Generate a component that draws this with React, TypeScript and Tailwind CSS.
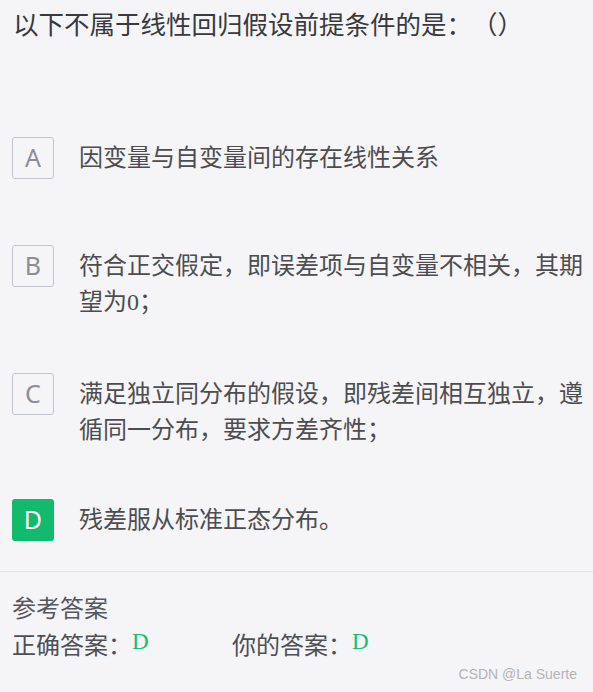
import React from "react";

interface Option {
  key: string;
  text: React.ReactNode;
  selected?: boolean;
}

const options: Option[] = [
  { key: "A", text: "因变量与自变量间的存在线性关系" },
  {
    key: "B",
    text: (
      <>
        符合正交假定，即误差项与自变量不相关，其期望为
        <span className="font-['Liberation_Serif',serif]">0</span>；
      </>
    ),
  },
  { key: "C", text: "满足独立同分布的假设，即残差间相互独立，遵循同一分布，要求方差齐性；" },
  { key: "D", text: "残差服从标准正态分布。", selected: true },
];

const cjk = "font-['Noto_Sans_CJK_SC','Noto_Sans',sans-serif]";

const OptionRow: React.FC<{ option: Option; last: boolean }> = ({ option, last }) => {
  return (
    <div className={`flex items-start ${last ? "" : "min-h-[108px] pb-[53px]"}`}>
      <div
        className={
          option.selected
            ? "w-[42px] h-[42px] shrink-0 rounded-[3px] bg-[#12ba6e] text-white flex items-center justify-center text-[25px] font-['Noto_Sans',sans-serif]"
            : "w-[42px] h-[42px] shrink-0 rounded-[3px] border border-[#c3c5cc] text-[#8b8e97] flex items-center justify-center text-[25px] font-['Noto_Sans',sans-serif]"
        }
      >
        {option.key}
      </div>
      <div className={`ml-[25px] mt-[1px] flex-1 text-[24px] leading-[36px] text-[#4d4d4f] ${cjk}`}>
        {option.text}
      </div>
    </div>
  );
};

export default function App() {
  return (
    <div
      className={`relative w-[593px] h-[692px] overflow-hidden bg-[#f5f5f8] [text-spacing-trim:space-all] ${cjk}`}
    >
      <div className="pl-[13px] pt-[5px] text-[25.5px] leading-[36px] text-[#38393c]">
        以下不属于线性回归假设前提条件的是：（）
      </div>

      <div className="mt-[96px] pl-[12px] pr-[6px]">
        {options.map((opt, i) => (
          <OptionRow key={opt.key} option={opt} last={i === options.length - 1} />
        ))}
      </div>

      <div className="mt-[30px] border-t border-[#e3e3ea] px-[12px] pt-[17px]">
        <div className="text-[24px] leading-[36px] text-[#55575e]">参考答案</div>
        <div className="mt-[1px] flex items-center text-[24px] leading-[36px] text-[#4d4f55]">
          <div className="w-[220px] flex items-center">
            <span>正确答案：</span>
            <span className="font-['Liberation_Serif',serif] text-[23px] text-[#16c06f] -mt-[4px]">D</span>
          </div>
          <div className="flex items-center">
            <span>你的答案：</span>
            <span className="font-['Liberation_Serif',serif] text-[23px] text-[#16c06f] -mt-[4px]">D</span>
          </div>
        </div>
      </div>

      <div className="absolute right-[16px] bottom-[7px] text-[14px] text-[#b3b3b6] font-['Liberation_Sans',sans-serif]">
        CSDN @La Suerte
      </div>
    </div>
  );
}
